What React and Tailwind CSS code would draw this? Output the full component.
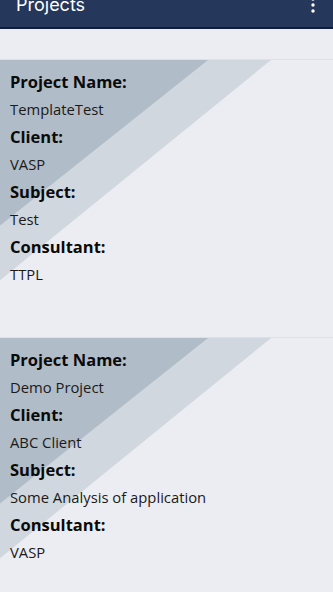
const projects = [
  { name: "TemplateTest", client: "VASP", subject: "Test", consultant: "TTPL" },
  { name: "Demo Project", client: "ABC Client", subject: "Some Analysis of application", consultant: "VASP" },
];

const Field = ({ label, value }) => (
  <>
    <p className="text-[16.5px] font-bold leading-[27.5px] text-[#0a0a0a]">{label}</p>
    <p className="text-[14.8px] leading-[27.5px] text-[#1a1a1a]">{value}</p>
  </>
);

const ProjectCard = ({ p }) => (
  <div className="relative h-[278px] border-t border-[#dfe0e5] overflow-hidden">
    {/* diagonal decoration */}
    <svg className="absolute inset-0 w-full h-full" viewBox="0 0 333 278" preserveAspectRatio="none">
      <polygon points="0,0 271,0 0,221" fill="#d0d7de" />
      <polygon points="0,0 208,0 0,166" fill="#b0bcc7" />
    </svg>
    <div className="relative px-[10px] pt-2">
      <Field label="Project Name:" value={p.name} />
      <Field label="Client:" value={p.client} />
      <Field label="Subject:" value={p.subject} />
      <Field label="Consultant:" value={p.consultant} />
    </div>
  </div>
);

export default function App() {
  return (
    <div className="w-[333px] h-[592px] overflow-hidden bg-[#ecedf2]" style={{ fontFamily: '"Open Sans", sans-serif' }}>
      <div className="h-[57px] -mt-[28px] bg-[#25375b] border-b-2 border-[#0f1e3b] flex items-center justify-between pl-4 pr-[18px] pt-[10px]">
        <span className="text-white text-[18px]" style={{ fontFamily: 'Inter, sans-serif' }}>Projects</span>
        <svg width="4" height="16" viewBox="0 0 4 16" fill="#fff" className="mt-[1px]">
          <circle cx="2" cy="2" r="1.7" />
          <circle cx="2" cy="8" r="1.7" />
          <circle cx="2" cy="14" r="1.7" />
        </svg>
      </div>
      <div className="h-[30px]" />
      {projects.map((p) => (
        <ProjectCard key={p.name} p={p} />
      ))}
    </div>
  );
}
